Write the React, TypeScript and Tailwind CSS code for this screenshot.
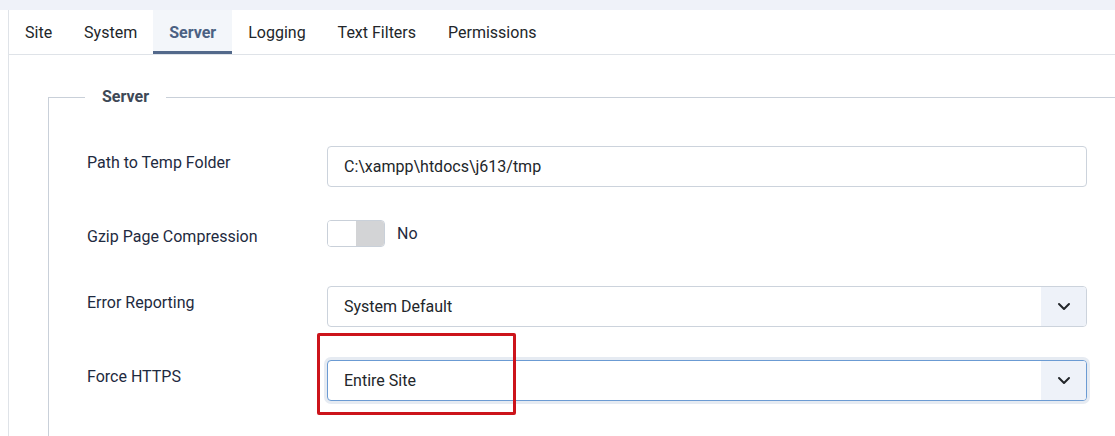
import React from "react";

function Chevron() {
  return (
    <svg width="14" height="9" viewBox="0 0 14 9" fill="none">
      <path d="M2 2l5 5 5-5" stroke="#22262a" strokeWidth="2" strokeLinecap="round" strokeLinejoin="round" />
    </svg>
  );
}

function Select({ value, focused }: { value: string; focused?: boolean }) {
  return (
    <div
      className={
        "flex h-[41px] w-[760px] items-stretch rounded-[4px] border bg-white " +
        (focused
          ? "border-[#6b9bd3] shadow-[0_0_0_3px_#e6ebf2]"
          : "border-[#ccd3dc]")
      }
    >
      <div className="flex flex-1 items-center pl-4 text-[16px] text-[#22262a]">{value}</div>
      <div className="flex w-[45px] items-center justify-center rounded-r-[3px] bg-[#eef2f9]">
        <Chevron />
      </div>
    </div>
  );
}

export default function App() {
  const tabs = ["Site", "System", "Server", "Logging", "Text Filters", "Permissions"];
  return (
    <div
      className="relative h-[436px] w-[1115px] overflow-hidden bg-white"
      style={{ fontFamily: "Roboto, 'Liberation Sans', sans-serif" }}
    >
      <div className="h-[10px] bg-[#eff2f9]" />
      <div className="ml-[8px] h-[426px] border-l border-[#dfe3e8]">
        <div className="flex border-b border-[#dfe3e8]">
          {tabs.map((t) =>
            t === "Server" ? (
              <div
                key={t}
                className="flex h-[44px] items-center bg-[#f3f6fa] px-4 pt-[2px] text-[16px] font-bold text-[#4b6183] shadow-[inset_0_-3px_0_#53698b]"
              >
                {t}
              </div>
            ) : (
              <div key={t} className="flex h-[44px] items-center px-4 pt-[2px] text-[16px] text-[#22262a]">
                {t}
              </div>
            )
          )}
        </div>
        <fieldset className="ml-[39px] mr-[-40px] mt-[30px] h-[400px] border border-[#c9d0d9] pl-[37px] pt-[37px]">
          <legend className="ml-[-1px] px-[17px] text-[16px] font-bold leading-6 text-[#3e4856]">Server</legend>
          <div className="flex">
            <div className="w-[241px] pl-px pt-[5px] text-[16px] leading-6 text-[#1e2a40]">Path to Temp Folder</div>
            <div className="flex h-[41px] w-[760px] items-center rounded-[4px] border border-[#ccd3dc] pl-4 text-[16px] text-[#22262a]">
              C:\xampp\htdocs\j613/tmp
            </div>
          </div>
          <div className="mt-[33px] flex">
            <div className="w-[241px] pl-px pt-[5px] text-[16px] leading-6 text-[#1e2a40]">Gzip Page Compression</div>
            <div className="flex items-start">
              <div className="flex h-[27px] w-[58px] overflow-hidden rounded-[4px] border border-[#c9d0d9]">
                <div className="flex-1 bg-white" />
                <div className="flex-1 bg-[#d3d4d6]" />
              </div>
              <span className="ml-3 text-[16px] leading-[27px] text-[#1e2a40]">No</span>
            </div>
          </div>
          <div className="mt-[37px] flex">
            <div className="w-[241px] pl-px pt-[5px] text-[16px] leading-6 text-[#1e2a40]">Error Reporting</div>
            <Select value="System Default" />
          </div>
          <div className="mt-[33px] flex">
            <div className="w-[241px] pl-px pt-[5px] text-[16px] leading-6 text-[#1e2a40]">Force HTTPS</div>
            <Select value="Entire Site" focused />
          </div>
        </fieldset>
      </div>
      <div className="pointer-events-none absolute left-[317px] top-[333px] h-[82px] w-[199px] rounded-[2px] border-[3px] border-[#cc141b]" />
    </div>
  );
}
